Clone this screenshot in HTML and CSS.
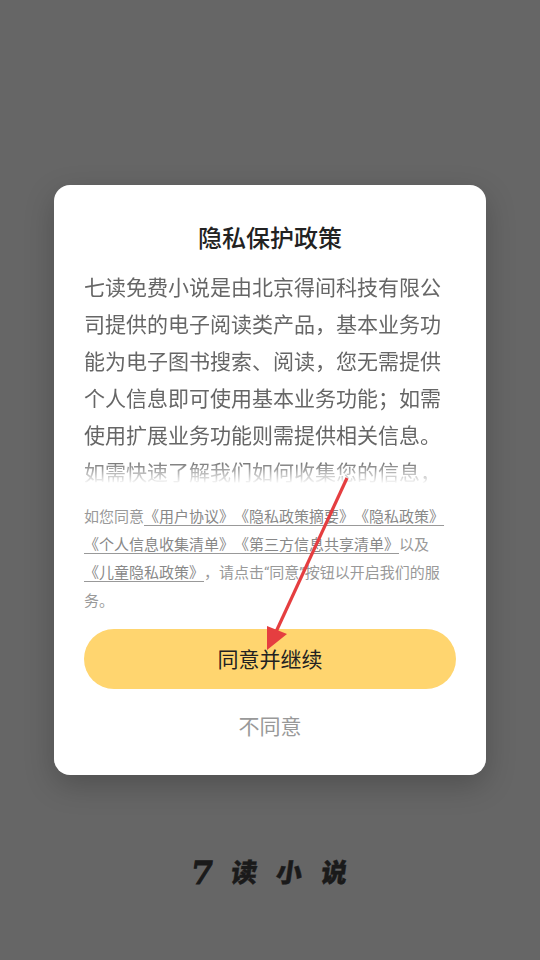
FILE: index.html
```html
<!DOCTYPE html>
<html lang="zh-CN">
<head>
<meta charset="utf-8">
<title>隐私保护政策</title>
<link rel="stylesheet" href="styles.css">
</head>
<body>
<main class="page">
  <section class="card">
    <h1 class="title">隐私保护政策</h1>
    <div class="intro">七读免费小说是由北京得间科技有限公司提供的电子阅读类产品，基本业务功能为电子图书搜索、阅读，您无需提供个人信息即可使用基本业务功能；如需使用扩展业务功能则需提供相关信息。如需快速了解我们如何收集您的信息，</div>
    <p class="terms">如您同意<a class="link">《用户协议》《隐私政策摘要》《隐私政策》<br>《个人信息收集清单》《第三方信息共享清单》</a>以及<br><a class="link">《儿童隐私政策》</a>，请点击“同意”按钮以开启我们的服<br>务。</p>
    <button class="agree">同意并继续</button>
    <button class="decline">不同意</button>
  </section>
  <div class="logo"><span class="seven">7</span><span>读</span><span>小</span><span>说</span></div>
</main>
<svg class="arrow" width="540" height="960" viewBox="0 0 540 960">
  <line x1="347" y1="478" x2="275" y2="634" stroke="#e53e40" stroke-width="3.2"/>
  <polygon points="267,626 287,634 267,650" fill="#e53e40"/>
</svg>
</body>
</html>
```
FILE: styles.css
```css
html, body {
  margin: 0;
  padding: 0;
}
body {
  width: 540px;
  height: 960px;
  overflow: hidden;
  background: #666666;
  font-family: "Roboto", "Noto Sans CJK SC", sans-serif;
  text-spacing-trim: space-all;
  font-kerning: none;
}
.page {
  display: flex;
  flex-direction: column;
  align-items: center;
  padding-top: 185px;
}
.card {
  box-sizing: border-box;
  width: 432px;
  height: 590px;
  padding: 36px 30px 0;
  background: #ffffff;
  border-radius: 16px;
  box-shadow: 0 10px 30px rgba(0, 0, 0, 0.22);
  display: flex;
  flex-direction: column;
}
.title {
  margin: 0;
  height: 36px;
  font-size: 24px;
  line-height: 36px;
  font-weight: 500;
  color: #222222;
  text-align: center;
}
.intro {
  margin-top: 13px;
  height: 215px;
  overflow: hidden;
  font-size: 21px;
  line-height: 37px;
  color: #666666;
  -webkit-mask-image: linear-gradient(to bottom, #000 0, #000 190px, transparent 214px);
  mask-image: linear-gradient(to bottom, #000 0, #000 190px, transparent 214px);
}
.terms {
  margin: 18px 0 0;
  font-size: 15px;
  line-height: 28px;
  color: #999999;
}
.link {
  color: #888888;
  text-decoration: underline;
  text-decoration-color: #999999;
  text-decoration-thickness: 1px;
  text-underline-offset: 3px;
}
.agree {
  margin: 14px 0 0;
  height: 60px;
  padding: 0;
  border: 0;
  border-radius: 30px;
  background: #ffd56f;
  color: #222222;
  font: inherit;
  font-size: 21px;
  line-height: 62px;
}
.decline {
  margin: 20px 0 0;
  height: 36px;
  padding: 0;
  border: 0;
  background: none;
  color: #999999;
  font: inherit;
  font-size: 21px;
  line-height: 36px;
}
.logo {
  margin-top: 79px;
  padding-right: 2px;
  display: flex;
  align-items: center;
  gap: 19px;
  height: 38px;
  font-size: 26px;
  line-height: 38px;
  font-weight: 900;
  color: #1a1a1a;
  -webkit-text-stroke: 0.4px #1a1a1a;
  transform: skewX(-8deg);
}
.logo .seven {
  font-family: "DejaVu Serif", serif;
  font-weight: 700;
  font-size: 32px;
  margin-right: -1px;
  -webkit-text-stroke: 1px #1a1a1a;
}
.arrow {
  position: absolute;
  left: 0;
  top: 0;
  pointer-events: none;
}
```
